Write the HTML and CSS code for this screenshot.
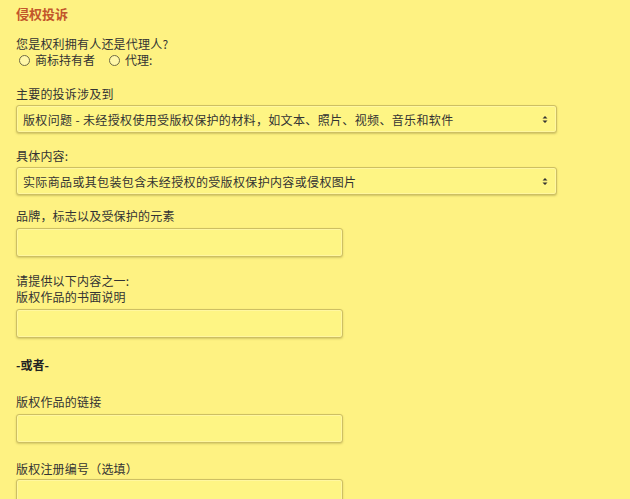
FILE: index.html
```html
<!DOCTYPE html>
<html>
  <head>
    <meta charset="utf-8" />
    <title>侵权投诉</title>
    <link rel="stylesheet" href="styles.css">
  </head>
  <body>
    <div class="page">
      <div class="title">侵权投诉</div>

      <div class="group group-owner">
        <div class="label">您是权利拥有人还是代理人?</div>
        <div class="radios">
          <span class="radio"><span class="dot"></span>商标持有者</span>
          <span class="radio"><span class="dot"></span>代理:</span>
        </div>
      </div>

      <div class="group group-main">
        <div class="label">主要的投诉涉及到</div>
        <div class="select">
          <span>版权问题 - 未经授权使用受版权保护的材料，如文本、照片、视频、音乐和软件</span>
          <svg class="arrows" width="6" height="9" viewBox="0 0 6 9">
            <path d="M0.5 3.5 L3 1 L5.5 3.5 Z M0.5 5.5 L3 8 L5.5 5.5 Z" fill="#333" />
          </svg>
        </div>
      </div>

      <div class="group group-detail">
        <div class="label">具体内容:</div>
        <div class="select">
          <span>实际商品或其包装包含未经授权的受版权保护内容或侵权图片</span>
          <svg class="arrows" width="6" height="9" viewBox="0 0 6 9">
            <path d="M0.5 3.5 L3 1 L5.5 3.5 Z M0.5 5.5 L3 8 L5.5 5.5 Z" fill="#333" />
          </svg>
        </div>
      </div>

      <div class="group group-brand">
        <div class="label">品牌，标志以及受保护的元素</div>
        <div class="input"></div>
      </div>

      <div class="group group-desc">
        <div class="label">请提供以下内容之一:</div>
        <div class="label">版权作品的书面说明</div>
        <div class="input"></div>
      </div>

      <div class="or">-或者-</div>

      <div class="group group-link">
        <div class="label">版权作品的链接</div>
        <div class="input"></div>
      </div>

      <div class="group group-reg">
        <div class="label">版权注册编号（选填）</div>
        <div class="input"></div>
      </div>
    </div>
  </body>
</html>
```

FILE: styles.css
```css
html,
body {
  margin: 0;
  padding: 0;
  height: 100%;
  overflow: hidden;
}

body {
  background: #fef282;
  font-family: "Noto Sans CJK SC", "Noto Sans", sans-serif;
  font-size: 12px;
  color: #333;
}

.page {
  padding: 6px 16px 0 16px;
  display: flex;
  flex-direction: column;
}

.title {
  font-size: 13px;
  font-weight: bold;
  line-height: 16px;
  color: #c2562b;
}

.label {
  line-height: 16px;
  letter-spacing: 0.2px;
}

.group {
  display: flex;
  flex-direction: column;
}

.group-owner {
  margin-top: 14px;
}

.group-main {
  margin-top: 18px;
}

.group-detail {
  margin-top: 15px;
}

.group-brand {
  margin-top: 13px;
}

.group-desc {
  margin-top: 16px;
}

.group-link {
  margin-top: 21px;
}

.group-reg {
  margin-top: 18px;
}

.group-reg .input {
  margin-top: 2px;
}

.radios {
  display: flex;
  gap: 14px;
  line-height: 16px;
  padding-left: 3px;
}

.radio {
  display: flex;
  align-items: center;
  gap: 5px;
}

.dot {
  width: 9px;
  height: 9px;
  border: 1px solid #6f6a45;
  border-radius: 50%;
  background: #fff7a8;
}

.select {
  margin-top: 3px;
  width: 541px;
  height: 28px;
  box-sizing: border-box;
  border: 1px solid #cdbf63;
  border-radius: 3px;
  box-shadow: 0 1px 2px rgba(120, 110, 40, 0.35), inset 0 0 0 1px #fff7a0;
  background: #fef584;
  display: flex;
  align-items: center;
  justify-content: space-between;
  padding: 0 8px 0 6px;
  letter-spacing: 0.35px;
}

.arrows {
  display: block;
}

.input {
  margin-top: 4px;
  width: 327px;
  height: 29px;
  box-sizing: border-box;
  border: 1px solid #cdbf63;
  border-radius: 3px;
  box-shadow: 0 1px 2px rgba(120, 110, 40, 0.3), inset 0 0 0 1px #fff7a0;
  background: #fef584;
}

.or {
  margin-top: 19px;
  font-weight: bold;
  line-height: 16px;
  color: #222;
}
```
